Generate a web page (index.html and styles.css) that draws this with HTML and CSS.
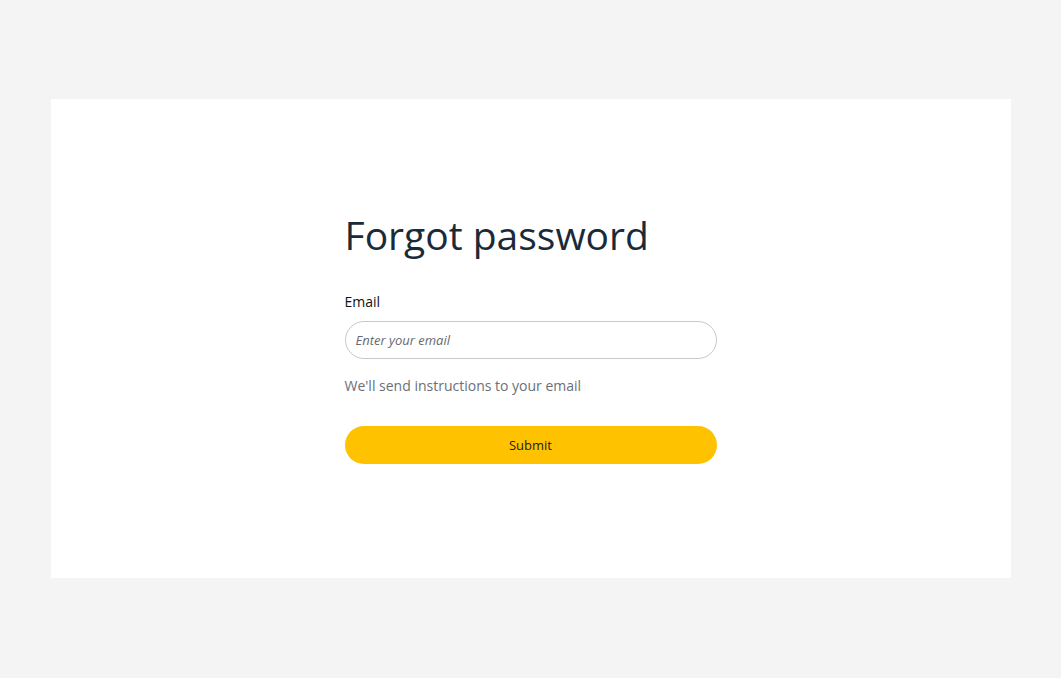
FILE: index.html
```html
<!DOCTYPE html>
<html>
<head>
<meta charset="utf-8">
<link rel="stylesheet" href="styles.css">
</head>
<body>
<div class="page">
  <div class="card">
    <form class="form">
      <h1 class="title">Forgot password</h1>
      <label class="label" for="email">Email</label>
      <input class="input" id="email" type="email" placeholder="Enter your email">
      <p class="help">We'll send instructions to your email</p>
      <button class="btn" type="button">Submit</button>
    </form>
  </div>
</div>
</body>
</html>
```
FILE: styles.css
```css
html, body {
  margin: 0;
  padding: 0;
  background: #f4f4f4;
  font-family: "Open Sans", "Noto Sans", sans-serif;
}
.page {
  width: 1061px;
  height: 678px;
  box-sizing: border-box;
  padding-top: 99px;
  display: flex;
  justify-content: center;
  align-items: flex-start;
}
.card {
  width: 960px;
  height: 479px;
  box-sizing: border-box;
  padding-top: 112px;
  background: #ffffff;
  display: flex;
  justify-content: center;
  align-items: flex-start;
}
.form {
  width: 372px;
  display: flex;
  flex-direction: column;
  margin: 0;
}
.title {
  margin: 0 0 33px 0;
  font-size: 39px;
  line-height: 48px;
  font-weight: 400;
  color: #1b2a38;
}
.label {
  font-size: 14px;
  line-height: 20px;
  color: #111111;
  margin-bottom: 9px;
}
.input {
  box-sizing: border-box;
  height: 38px;
  border: 1px solid #c9c9c9;
  border-radius: 19px;
  padding: 0 10px;
  font-family: inherit;
  font-size: 13px;
  outline: none;
  margin: 0;
}
.input::placeholder {
  font-style: italic;
  color: #666a70;
}
.help {
  margin: 17px 0 0 0;
  font-size: 14px;
  line-height: 20px;
  color: #6b7078;
}
.btn {
  margin-top: 30px;
  height: 38px;
  border: none;
  border-radius: 19px;
  background: #ffc200;
  font-family: inherit;
  font-size: 13px;
  font-weight: 500;
  color: #1d1d1d;
  cursor: pointer;
}
```
